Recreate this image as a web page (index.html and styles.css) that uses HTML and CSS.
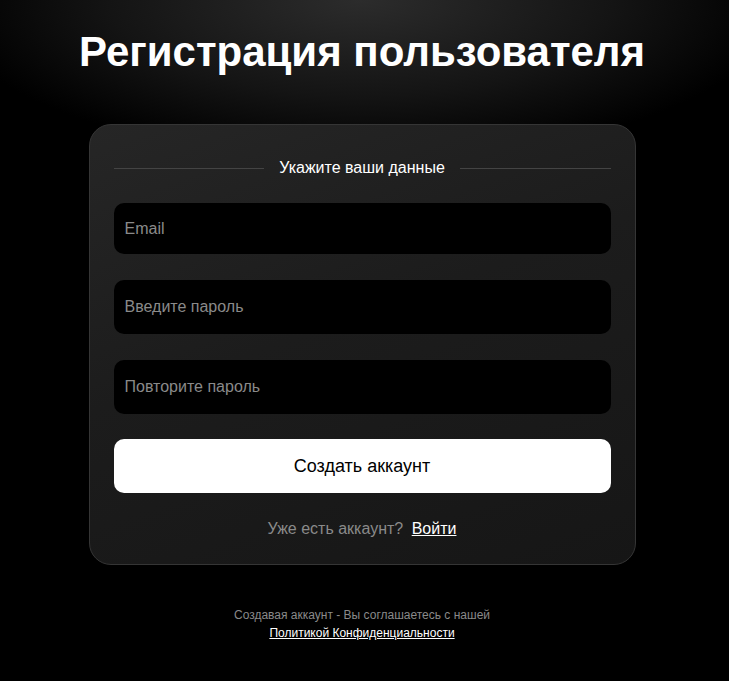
FILE: index.html
```html
<!DOCTYPE html>
<html lang="ru">
<head>
<meta charset="utf-8">
<title>Регистрация пользователя</title>
<link rel="stylesheet" href="styles.css">
</head>
<body>
<main class="page">
  <h1 class="title">Регистрация пользователя</h1>
  <form class="card">
    <div class="divider"><span class="divider-line"></span><span class="divider-text">Укажите ваши данные</span><span class="divider-line"></span></div>
    <input class="field field-email" type="email" placeholder="Email">
    <input class="field" type="password" placeholder="Введите пароль">
    <input class="field" type="password" placeholder="Повторите пароль">
    <button class="submit" type="button">Создать аккаунт</button>
    <p class="login">Уже есть аккаунт? <a class="login-link" href="#">Войти</a></p>
  </form>
  <p class="terms">Создавая аккаунт - Вы соглашаетесь с нашей<br><a class="terms-link" href="#">Политикой Конфиденциальности</a></p>
</main>
</body>
</html>
```
FILE: styles.css
```css
html, body {
  margin: 0;
  height: 100%;
}
body {
  background: radial-gradient(ellipse 420px 160px at 49.6% 0, #2c2c2c 0%, #141414 60%, #000 100%) no-repeat, #000;
  font-family: "Liberation Sans", Arial, sans-serif;
  color: #fff;
}
.page {
  display: flex;
  flex-direction: column;
  align-items: center;
  padding-right: 5px;
}
.title {
  margin: 28px 0 0;
  font-size: 42px;
  line-height: 48px;
  font-weight: bold;
  color: #fff;
}
.card {
  box-sizing: border-box;
  width: 547px;
  margin-top: 48px;
  padding: 34px 24px 26px;
  border: 1px solid #353535;
  border-radius: 22px;
  background: linear-gradient(160deg, #262626 0%, #1c1c1c 45%, #161616 100%);
  display: flex;
  flex-direction: column;
}
.divider {
  display: flex;
  align-items: center;
  gap: 15px;
  height: 18px;
}
.divider-line {
  flex: 1;
  height: 1px;
  background: #444;
}
.divider-text {
  font-size: 16px;
  line-height: 18px;
  color: #fff;
}
.field {
  box-sizing: border-box;
  height: 54px;
  margin-top: 26px;
  padding: 0 11px;
  border: none;
  border-radius: 10px;
  background: #000;
  color: #fff;
  font-family: "Liberation Sans", Arial, sans-serif;
  font-size: 16px;
  outline: none;
}
.field-email {
  height: 51px;
}
.field::placeholder {
  color: #8a8a8a;
  opacity: 1;
}
.submit {
  height: 54px;
  margin-top: 25px;
  border: none;
  border-radius: 10px;
  background: #fff;
  color: #000;
  font-family: "Liberation Sans", Arial, sans-serif;
  font-size: 18px;
  cursor: pointer;
}
.login {
  margin: 27px 0 0;
  text-align: center;
  font-size: 16px;
  line-height: 18px;
  color: #8a8a8a;
}
.login-link {
  margin-left: 4px;
  color: #fff;
  text-decoration: underline;
}
.terms {
  margin: 41px 0 0;
  text-align: center;
  font-size: 12px;
  line-height: 18px;
  color: #8a8a8a;
}
.terms-link {
  color: #fff;
  text-decoration: underline;
}
```
